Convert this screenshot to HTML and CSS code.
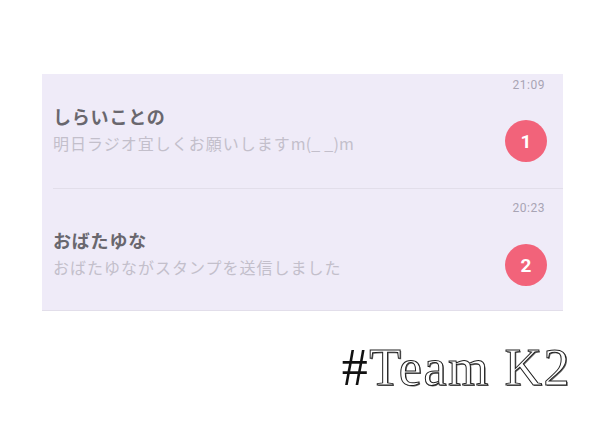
FILE: index.html
```html
<!DOCTYPE html>
<html lang="ja">
<head>
    <meta charset="UTF-8">
    <meta name="viewport" content="width=device-width, initial-scale=1.0">
    <title>トーク</title>
    <link rel="stylesheet" href="styles.css">
</head>
<body>
    <div class="talk-list">
        <!-- 1件目 -->
        <div class="talk first">
            <div class="time">21:09</div>
            <div class="talk-body">
                <div class="texts">
                    <div class="name">しらいことの</div>
                    <div class="preview">明日ラジオ宜しくお願いします<span class="latin">m(_ _)m</span></div>
                </div>
                <div class="badge">1</div>
            </div>
        </div>

        <!-- 2件目 -->
        <div class="talk second">
            <div class="time">20:23</div>
            <div class="talk-body">
                <div class="texts">
                    <div class="name">おばたゆな</div>
                    <div class="preview">おばたゆながスタンプを送信しました</div>
                </div>
                <div class="badge">2</div>
            </div>
        </div>
    </div>

    <div class="caption"><span class="hash">#</span>Team K2</div>
</body>
</html>
```

FILE: styles.css
```css
* {
    margin: 0;
    padding: 0;
    box-sizing: border-box;
}

body {
    font-family: 'Noto Sans CJK JP', 'Noto Sans', sans-serif;
    background: #ffffff;
    padding: 74px 29px 0 42px;
    width: 600px;
    height: 435px;
    overflow: hidden;
}

.talk-list {
    width: 521px;
    background-color: #efebf8;
}

.talk {
    position: relative;
    padding: 4px 16px 27px 11px;
}

.talk.first::after {
    content: "";
    position: absolute;
    left: 11px;
    right: 0;
    bottom: 0;
    height: 1px;
    background-color: #e2deea;
}

.talk.second {
    padding-top: 12px;
    padding-bottom: 24px;
    border-bottom: 1px solid #e2deea;
}

.time {
    font-family: 'Roboto', 'Liberation Sans', sans-serif;
    font-size: 12px;
    line-height: 14px;
    color: #a8a4b4;
    text-align: right;
    margin-right: 2px;
    letter-spacing: 0.5px;
}

.talk-body {
    display: flex;
    justify-content: space-between;
    align-items: flex-start;
    margin-top: 12px;
}

.second .talk-body {
    margin-top: 13px;
}

.name {
    font-size: 18px;
    line-height: 24px;
    font-weight: bold;
    letter-spacing: 0.8px;
    color: #69676e;
}

.preview {
    margin-top: 4px;
    font-size: 16px;
    line-height: 22px;
    letter-spacing: 1px;
    color: #c3bfcb;
}

.preview .latin {
    letter-spacing: 0.2px;
}

.badge {
    width: 42px;
    height: 42px;
    margin-top: 16px;
    border-radius: 50%;
    background-color: #f2637a;
    color: #ffffff;
    font-family: 'Roboto', 'Liberation Sans', sans-serif;
    font-weight: bold;
    font-size: 19px;
    display: flex;
    justify-content: center;
    align-items: center;
}

.caption {
    margin-top: 29px;
    text-align: right;
    font-family: 'Liberation Serif', 'DejaVu Serif', serif;
    font-size: 52px;
    line-height: 56px;
    letter-spacing: 1.5px;
    color: #ffffff;
    -webkit-text-stroke: 1px #1e1e1e;
    text-shadow: 1px 1px 0 #666666;
}

.caption .hash {
    color: #111111;
    -webkit-text-stroke: 0;
    text-shadow: none;
}
```
